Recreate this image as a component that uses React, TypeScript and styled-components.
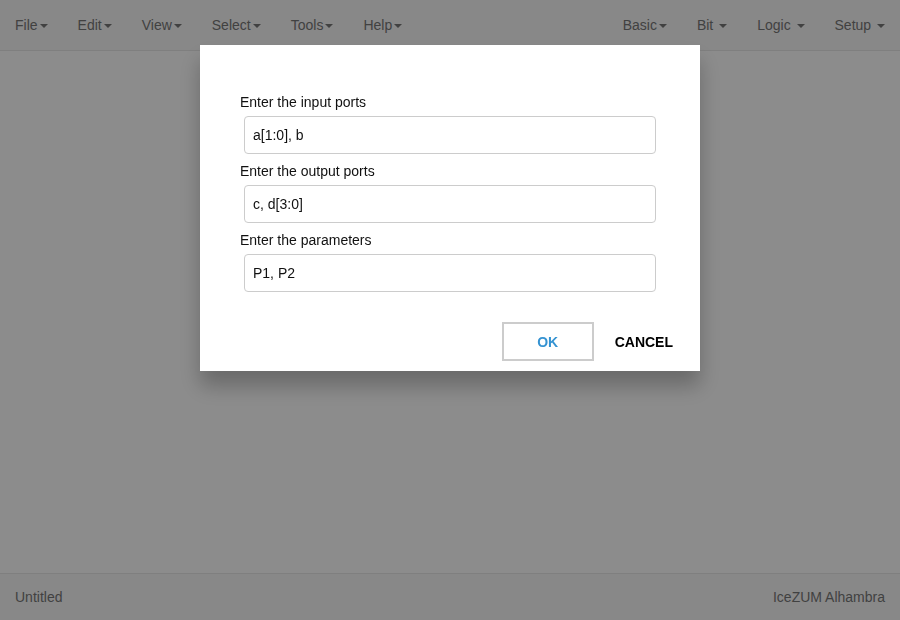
import React from "react";
import styled, { createGlobalStyle } from "styled-components";

const Global = createGlobalStyle`
  html, body { margin: 0; padding: 0; height: 100%; }
  body {
    font-family: "Liberation Sans", Arial, Helvetica, sans-serif;
    font-size: 14px;
    line-height: 20px;
    color: #333;
    background: #ffffff;
  }
  #root { height: 100%; }
  * { box-sizing: border-box; }
`;

const Page = styled.div`
  height: 100vh;
  display: flex;
  flex-direction: column;
`;

const Navbar = styled.nav`
  height: 51px;
  background: #f8f8f8;
  border-bottom: 1px solid #e7e7e7;
  display: flex;
  justify-content: space-between;
`;

const Menu = styled.ul`
  list-style: none;
  margin: 0;
  padding: 0;
  display: flex;
`;

const MenuItem = styled.li`
  padding: 15px;
  color: #777;
  line-height: 20px;
  white-space: pre;
`;

const Caret = styled.span`
  display: inline-block;
  width: 0;
  height: 0;
  margin-left: 2px;
  vertical-align: middle;
  border-top: 4px solid;
  border-right: 4px solid transparent;
  border-left: 4px solid transparent;
`;

const Main = styled.main`
  flex: 1;
  background: #ffffff;
`;

const Footer = styled.footer`
  height: 47px;
  border-top: 1px solid #e7e7e7;
  background: #f8f8f8;
  display: flex;
  justify-content: space-between;
  align-items: center;
  padding: 0 15px;
  color: #777;
`;

const Dimmer = styled.div`
  position: fixed;
  inset: 0;
  background: rgba(0, 0, 0, 0.45);
`;

const Dialog = styled.div`
  position: fixed;
  top: 45px;
  left: 200px;
  width: 500px;
  background: #fff;
  box-shadow: 0 15px 20px 0 rgba(0, 0, 0, 0.25);
  display: flex;
  flex-direction: column;
`;

const Content = styled.div`
  padding: 47px 44px 0 40px;
  display: flex;
  flex-direction: column;
`;

const Label = styled.label`
  display: block;
  color: #111;
  line-height: 20px;
  margin-bottom: 4px;
`;

const Input = styled.input`
  display: block;
  margin: 0 0 7px 4px;
  height: 38px;
  width: 412px;
  padding: 0 8px;
  border: 1px solid #ccc;
  border-radius: 4px;
  font-family: inherit;
  font-size: 14px;
  color: #111;
  background: #fff;
  outline: none;
`;

const Buttons = styled.div`
  display: flex;
  justify-content: flex-end;
  align-items: center;
  gap: 21px;
  padding: 23px 27px 10px;
`;

const Button = styled.button<{ $primary?: boolean }>`
  height: 39px;
  padding: 0;
  width: ${(p) => (p.$primary ? "92px" : "auto")};
  border: ${(p) => (p.$primary ? "2px solid #ccc" : "none")};
  background: #fff;
  font-family: inherit;
  font-size: 14px;
  font-weight: bold;
  text-transform: uppercase;
  color: ${(p) => (p.$primary ? "#3593d2" : "#000")};
  cursor: pointer;
`;

const leftMenus = ["File", "Edit", "View", "Select", "Tools", "Help"];
const rightMenus = ["Basic", "Bit ", "Logic ", "Setup "];

const fields = [
  { label: "Enter the input ports", value: "a[1:0], b" },
  { label: "Enter the output ports", value: "c, d[3:0]" },
  { label: "Enter the parameters", value: "P1, P2" },
];

export default function App() {
  return (
    <>
      <Global />
      <Page>
        <Navbar>
          <Menu>
            {leftMenus.map((m) => (
              <MenuItem key={m}>
                {m}
                <Caret />
              </MenuItem>
            ))}
          </Menu>
          <Menu>
            {rightMenus.map((m) => (
              <MenuItem key={m}>
                {m}
                <Caret />
              </MenuItem>
            ))}
          </Menu>
        </Navbar>
        <Main />
        <Footer>
          <span>Untitled</span>
          <span>IceZUM Alhambra</span>
        </Footer>
      </Page>
      <Dimmer />
      <Dialog>
        <Content>
          {fields.map((f) => (
            <div key={f.label}>
              <Label>{f.label}</Label>
              <Input defaultValue={f.value} />
            </div>
          ))}
        </Content>
        <Buttons>
          <Button $primary>OK</Button>
          <Button>Cancel</Button>
        </Buttons>
      </Dialog>
    </>
  );
}
